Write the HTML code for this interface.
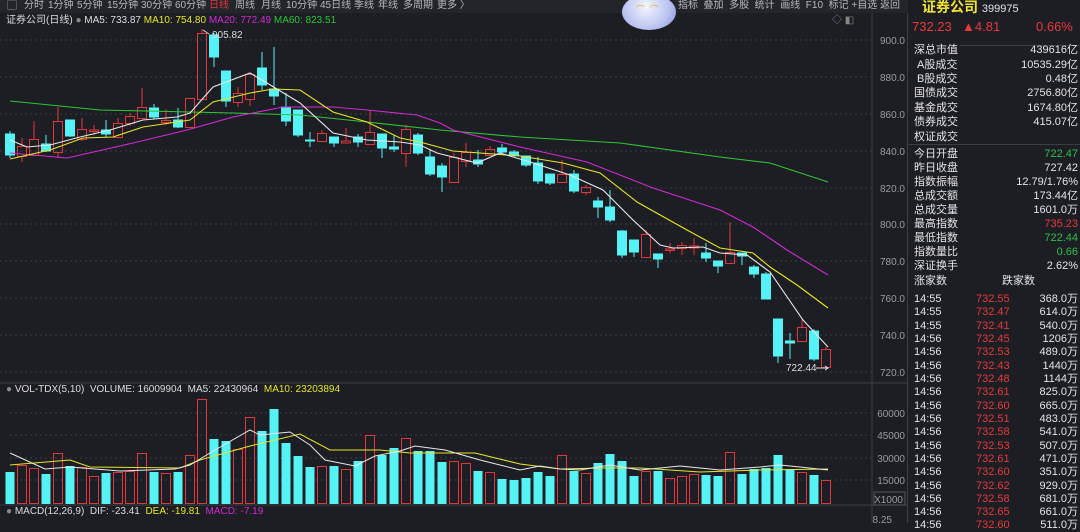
<!DOCTYPE html>
<html><head><meta charset="utf-8"><style>
*{margin:0;padding:0;box-sizing:border-box}
body{width:1080px;height:523px;background:#1c1e23;overflow:hidden;position:relative;font-family:"Liberation Sans","Noto Sans CJK SC",sans-serif;color:#c8c9cc}
.t{position:absolute;white-space:nowrap;font-size:10px;line-height:12px}
.tb{position:absolute;top:0;white-space:nowrap;font-size:10px;line-height:12px;color:#b8b9bc}
.r{color:#e8393d}.g{color:#2fc04a}.w{color:#e4e4e6}
.row{position:absolute;left:914px;width:164px;font-size:11px;line-height:13px;color:#e4e4e6}
.row span{position:absolute;right:0}
</style></head><body>
<div style="position:absolute;left:0;top:0;width:908px;height:13px;background:#22252a"></div>
<div class="t" style="left:7px;top:1px;color:#aaa">▢</div>
<div class="tb" style="left:24px">分时</div><div class="tb" style="left:48px">1分钟</div><div class="tb" style="left:77px">5分钟</div><div class="tb" style="left:107px">15分钟</div><div class="tb" style="left:141px">30分钟</div><div class="tb" style="left:175px">60分钟</div><div class="tb r" style="left:209px">日线</div><div class="tb" style="left:235px">周线</div><div class="tb" style="left:261px">月线</div><div class="tb" style="left:286px">10分钟</div><div class="tb" style="left:320px">45日线</div><div class="tb" style="left:354px">季线</div><div class="tb" style="left:378px">年线</div><div class="tb" style="left:403px">多周期</div><div class="tb" style="left:437px">更多 〉</div>
<div class="t" style="left:678px;top:0px;color:#b8b9bc">指标&nbsp;&nbsp;叠加&nbsp;&nbsp;多股&nbsp;&nbsp;统计&nbsp;&nbsp;画线&nbsp;&nbsp;F10&nbsp;&nbsp;标记&nbsp;+自选&nbsp;返回</div>
<div style="position:absolute;left:622px;top:-6px;width:54px;height:36px;border-radius:50%;background:radial-gradient(circle at 45% 35%,#f4f6ff,#b9c3f0 60%,#7f8cd8)"></div>
<div class="t" style="left:636px;top:4px;color:#e0a030;font-size:9px">⌒&nbsp;&nbsp;⌒</div>
<div class="t" style="left:6px;top:15px;color:#dcdcde">证券公司(日线) <span style="color:#888">●</span> MA5: 733.87 <span style="color:#e6e62a">MA10: 754.80</span> <span style="color:#d22ad2">MA20: 772.49</span> <span style="color:#2fc437">MA60: 823.51</span></div>
<div class="t" style="left:832px;top:15px;color:#888">◇ ◧</div>
<svg width="908" height="523" style="position:absolute;left:0;top:0">
<g stroke="#3a3d44" stroke-dasharray="2,3" stroke-width="1">
<line x1="0" x2="872" y1="40" y2="40"/><line x1="0" x2="872" y1="77" y2="77"/><line x1="0" x2="872" y1="114" y2="114"/><line x1="0" x2="872" y1="151" y2="151"/><line x1="0" x2="872" y1="188" y2="188"/><line x1="0" x2="872" y1="224" y2="224"/><line x1="0" x2="872" y1="261" y2="261"/><line x1="0" x2="872" y1="298" y2="298"/><line x1="0" x2="872" y1="335" y2="335"/><line x1="0" x2="872" y1="372" y2="372"/>
<line x1="10" x2="872" y1="413" y2="413"/><line x1="10" x2="872" y1="435" y2="435"/><line x1="10" x2="872" y1="458" y2="458"/><line x1="10" x2="872" y1="480" y2="480"/>
</g>
<line x1="872" y1="13" x2="872" y2="523" stroke="#3a3d44"/>
<line x1="0" y1="383" x2="908" y2="383" stroke="#3a3d44"/>
<line x1="0" y1="505" x2="908" y2="505" stroke="#3a3d44"/>
<line x1="907.5" y1="13" x2="907.5" y2="523" stroke="#3a3d44"/>
<g fill="#9a9ca0" font-size="10" font-family="Liberation Sans" text-anchor="end">
<text x="905" y="44">900.0</text><text x="905" y="81">880.0</text><text x="905" y="118">860.0</text><text x="905" y="155">840.0</text><text x="905" y="192">820.0</text><text x="905" y="228">800.0</text><text x="905" y="265">780.0</text><text x="905" y="302">760.0</text><text x="905" y="339">740.0</text><text x="905" y="376">720.0</text>
<text x="905" y="417">60000</text><text x="905" y="439">45000</text><text x="905" y="462">30000</text><text x="905" y="484">15000</text><text x="903" y="503">X1000</text><text x="892" y="523">8.25</text>
</g>
<rect x="874" y="492" width="31" height="13" fill="none" stroke="#555"/>
<g id="c">
<g stroke="#e0363c" fill="none" stroke-width="1">
<path d="M22 138V146M22 156V162M34 121V139M58 107V121M58 152V158M82 118V129M82 139V141M94 125V130M94 131V135M118 118V123M130 113V116M130 123V126M142 88V107M166 109V120M166 122V125M190 127V128M202 29V33M238 87V93M238 102V107M250 73V74M250 99V106M322 130V133M346 128V141M370 110V132M406 125V129M406 153V167M454 153V157M454 182V183M466 143V152M466 161V167M490 146V149M490 155V156M562 160V174M586 185V187M586 192V195M646 230V234M670 243V249M670 250V253M682 242V245M682 248V255M694 238V246M694 248V255M730 222V252M802 320V327M826 347V349"/>
<rect x="17.5" y="146.5" width="9" height="10"/><rect x="29.5" y="139.5" width="9" height="16"/><rect x="53.5" y="121.5" width="9" height="31"/><rect x="77.5" y="129.5" width="9" height="10"/><rect x="89.5" y="130" width="9" height="1.5"/><rect x="113.5" y="123.5" width="9" height="14"/><rect x="125.5" y="116.5" width="9" height="7"/><rect x="137.5" y="107.5" width="9" height="11"/><rect x="161.5" y="120.5" width="9" height="2"/><rect x="185.5" y="98.5" width="9" height="29"/><rect x="197.5" y="33.5" width="9" height="66"/><rect x="233.5" y="93.5" width="9" height="9"/><rect x="245.5" y="74.5" width="9" height="25"/><rect x="317.5" y="133.5" width="9" height="8"/><rect x="341.5" y="141" width="9" height="2"/><rect x="365.5" y="132.5" width="9" height="12"/><rect x="401.5" y="129.5" width="9" height="24"/><rect x="449.5" y="157.5" width="9" height="25"/><rect x="461.5" y="152.5" width="9" height="9"/><rect x="485.5" y="149.5" width="9" height="6"/><rect x="557.5" y="174.5" width="9" height="8"/><rect x="581.5" y="187.5" width="9" height="5"/><rect x="641.5" y="234.5" width="9" height="23"/><rect x="665.5" y="249" width="9" height="1.5"/><rect x="677.5" y="245.5" width="9" height="3"/><rect x="689.5" y="246" width="9" height="2"/><rect x="725.5" y="252.5" width="9" height="11"/><rect x="797.5" y="327.5" width="9" height="14"/><rect x="821.5" y="349.5" width="9" height="18"/>
</g>
<g stroke="#55f3f6" fill="#55f3f6" stroke-width="1">
<path d="M10 131V158M46 135V152M70 120V137M106 120V137M154 104V119M178 108V128M214 33V67M226 71V107M262 52V90M274 47V105M286 93V126M298 110V137M310 132V147M334 137V147M358 134V147M382 134V158M394 135V152M418 133V155M430 150V176M442 163V192M478 150V167M502 144V154M514 150V157M526 156V167M538 157V184M550 174V185M574 170V193M598 197V218M610 190V222M622 230V258M634 240V257M658 254V268M706 243V262M718 261V273M742 253V265M754 265V278M766 272V299M778 319V363M790 333V359M814 329V361"/>
<rect x="5.5" y="134" width="9" height="21"/><rect x="41.5" y="144" width="9" height="7"/><rect x="65.5" y="120" width="9" height="16"/><rect x="101.5" y="130" width="9" height="4"/><rect x="149.5" y="108" width="9" height="9"/><rect x="173.5" y="120" width="9" height="7"/><rect x="209.5" y="35" width="9" height="22"/><rect x="221.5" y="71" width="9" height="30"/><rect x="257.5" y="68" width="9" height="17"/><rect x="269.5" y="89" width="9" height="7"/><rect x="281.5" y="107" width="9" height="14"/><rect x="293.5" y="110" width="9" height="25"/><rect x="305.5" y="140" width="9" height="1"/><rect x="329.5" y="137" width="9" height="6"/><rect x="353.5" y="137" width="9" height="5"/><rect x="377.5" y="134" width="9" height="14"/><rect x="389.5" y="147" width="9" height="2"/><rect x="413.5" y="135" width="9" height="18"/><rect x="425.5" y="157" width="9" height="17"/><rect x="437.5" y="166" width="9" height="11"/><rect x="473.5" y="160" width="9" height="4"/><rect x="497.5" y="148" width="9" height="4"/><rect x="509.5" y="152" width="9" height="3"/><rect x="521.5" y="156" width="9" height="9"/><rect x="533.5" y="163" width="9" height="18"/><rect x="545.5" y="174" width="9" height="9"/><rect x="569.5" y="174" width="9" height="17"/><rect x="593.5" y="201" width="9" height="6"/><rect x="605.5" y="207" width="9" height="13"/><rect x="617.5" y="231" width="9" height="24"/><rect x="629.5" y="240" width="9" height="12"/><rect x="653.5" y="254" width="9" height="5"/><rect x="701.5" y="253" width="9" height="5"/><rect x="713.5" y="261" width="9" height="5"/><rect x="737.5" y="253" width="9" height="3"/><rect x="749.5" y="267" width="9" height="7"/><rect x="761.5" y="274" width="9" height="25"/><rect x="773.5" y="319" width="9" height="37"/><rect x="785.5" y="341" width="9" height="2"/><rect x="809.5" y="331" width="9" height="28"/>
</g>
</g>
<g fill="none" stroke-width="1.1">
<polyline stroke="#2fc437" points="10,101 100,110 233,113 300,115 367,122 440,130 520,137 620,143 720,157 770,163 828,182"/>
<polyline stroke="#d22ad2" points="10,153 67,158 133,143 187,130 233,117 283,107 333,107 367,110 417,115 440,123 453,130 520,147 587,162 653,188 720,210 753,227 787,250 828,275"/>
<polyline stroke="#e6e62a" points="10,159 50,150 83,138 113,137 143,127 177,122 190,120 213,102 250,93 273,89 300,90 333,112 367,122 400,138 420,142 453,151 520,156 563,163 600,173 637,202 687,230 720,248 753,253 770,267 797,285 828,308"/>
<polyline stroke="#e8e8e8" points="10,140 27,147 50,145 80,137 110,130 143,120 177,117 190,113 213,87 250,73 267,83 300,103 333,133 367,140 400,142 420,145 437,153 477,163 500,153 530,162 570,175 603,190 633,220 660,245 673,248 703,247 720,253 747,255 770,272 803,320 828,347"/>
</g>
<text x="212" y="38" fill="#ddd" font-size="10" font-family="Liberation Sans">905.82</text>
<path d="M203 30l6 4" stroke="#ddd"/>
<text x="786" y="371" fill="#ddd" font-size="10" font-family="Liberation Sans">722.44</text>
<path d="M816 368h12m-3-2l3 2-3 2" stroke="#ddd" fill="none"/>
<g fill="#55f3f6">
<rect x="5.5" y="472" width="9" height="32"/><rect x="41.5" y="474" width="9" height="30"/><rect x="65.5" y="466" width="9" height="38"/><rect x="101.5" y="473" width="9" height="31"/><rect x="149.5" y="472" width="9" height="32"/><rect x="173.5" y="472" width="9" height="32"/><rect x="209.5" y="439" width="9" height="65"/><rect x="221.5" y="441" width="9" height="63"/><rect x="257.5" y="431" width="9" height="73"/><rect x="269.5" y="409" width="9" height="95"/><rect x="281.5" y="443" width="9" height="61"/><rect x="293.5" y="456" width="9" height="48"/><rect x="305.5" y="467" width="9" height="37"/><rect x="329.5" y="466" width="9" height="38"/><rect x="353.5" y="461" width="9" height="43"/><rect x="377.5" y="455" width="9" height="49"/><rect x="389.5" y="448" width="9" height="56"/><rect x="413.5" y="451" width="9" height="53"/><rect x="425.5" y="451" width="9" height="53"/><rect x="437.5" y="462" width="9" height="42"/><rect x="473.5" y="471" width="9" height="33"/><rect x="497.5" y="479" width="9" height="25"/><rect x="509.5" y="480" width="9" height="24"/><rect x="521.5" y="478" width="9" height="26"/><rect x="533.5" y="472" width="9" height="32"/><rect x="545.5" y="476" width="9" height="28"/><rect x="569.5" y="471" width="9" height="33"/><rect x="593.5" y="463" width="9" height="41"/><rect x="605.5" y="454" width="9" height="50"/><rect x="617.5" y="461" width="9" height="43"/><rect x="629.5" y="476" width="9" height="28"/><rect x="653.5" y="471" width="9" height="33"/><rect x="701.5" y="475" width="9" height="29"/><rect x="713.5" y="476" width="9" height="28"/><rect x="737.5" y="474" width="9" height="30"/><rect x="749.5" y="469" width="9" height="35"/><rect x="761.5" y="468" width="9" height="36"/><rect x="773.5" y="455" width="9" height="49"/><rect x="785.5" y="469" width="9" height="35"/><rect x="809.5" y="475" width="9" height="29"/>
</g>
<g fill="none" stroke="#e0363c">
<rect x="17.5" y="465.5" width="9" height="38"/><rect x="29.5" y="468.5" width="9" height="35"/><rect x="53.5" y="453.5" width="9" height="50"/><rect x="77.5" y="467.5" width="9" height="36"/><rect x="89.5" y="476.5" width="9" height="27"/><rect x="113.5" y="472.5" width="9" height="31"/><rect x="125.5" y="471.5" width="9" height="32"/><rect x="137.5" y="453.5" width="9" height="50"/><rect x="161.5" y="473.5" width="9" height="30"/><rect x="185.5" y="455.5" width="9" height="48"/><rect x="197.5" y="399.5" width="9" height="104"/><rect x="233.5" y="449.5" width="9" height="54"/><rect x="245.5" y="417.5" width="9" height="86"/><rect x="317.5" y="466.5" width="9" height="37"/><rect x="341.5" y="469.5" width="9" height="34"/><rect x="365.5" y="435.5" width="9" height="68"/><rect x="401.5" y="438.5" width="9" height="65"/><rect x="449.5" y="461.5" width="9" height="42"/><rect x="461.5" y="463.5" width="9" height="40"/><rect x="485.5" y="472.5" width="9" height="31"/><rect x="557.5" y="455.5" width="9" height="48"/><rect x="581.5" y="473.5" width="9" height="30"/><rect x="641.5" y="471.5" width="9" height="32"/><rect x="665.5" y="478.5" width="9" height="25"/><rect x="677.5" y="476.5" width="9" height="27"/><rect x="689.5" y="474.5" width="9" height="29"/><rect x="725.5" y="452.5" width="9" height="51"/><rect x="797.5" y="472.5" width="9" height="31"/><rect x="821.5" y="480.5" width="9" height="23"/>
</g>
<g fill="none" stroke-width="1">
<polyline stroke="#e6e62a" points="10,465 70,460 90,467 180,468 200,460 250,446 300,434 330,450 380,450 410,453 475,453 520,464 560,469 600,468 640,468 700,472 760,470 828,469"/>
<polyline stroke="#e8e8e8" points="10,453 45,469 70,467 120,471 175,469 190,465 215,450 250,430 260,435 290,432 310,445 325,460 355,466 375,456 400,451 415,446 445,450 480,460 520,470 540,466 560,469 580,470 610,465 640,470 680,466 720,470 760,467 780,465 800,467 828,470"/>
</g>
</svg>
<div class="t" style="left:6px;top:384px;color:#dcdcde"><span style="color:#888">●</span> VOL-TDX(5,10)&nbsp; VOLUME: 16009904&nbsp; MA5: 22430964&nbsp; <span style="color:#e6e62a">MA10: 23203894</span></div>
<div class="t" style="left:6px;top:506px;color:#dcdcde"><span style="color:#888">●</span> MACD(12,26,9)&nbsp; DIF: -23.41&nbsp; <span style="color:#e6e62a">DEA: -19.81</span>&nbsp; <span style="color:#d22ad2">MACD: -7.19</span></div>

<div class="t" style="left:922px;top:-1px;font-size:14px;line-height:16px;color:#f0e33a;font-weight:bold">证券公司 <span style="font-size:11px;color:#e4e4e6;font-weight:normal">399975</span></div>
<div class="t r" style="left:912px;top:19px;font-size:13px;line-height:16px">732.23</div>
<div class="t r" style="left:962px;top:19px;font-size:13px;line-height:16px">▲4.81</div>
<div class="t r" style="left:1036px;top:19px;font-size:13px;line-height:16px">0.66%</div>
<div style="position:absolute;left:960px;top:45px;width:120px;height:1px;background:#3a3d44"></div>
<div style="position:absolute;left:908px;top:144px;width:172px;height:1px;background:#3a3d44"></div>
<div class="row" style="top:44px">深总市值<span>439616亿</span></div>
<div class="row" style="top:59px">&nbsp;A股成交<span>10535.29亿</span></div>
<div class="row" style="top:73px">&nbsp;B股成交<span>0.48亿</span></div>
<div class="row" style="top:87px">国债成交<span>2756.80亿</span></div>
<div class="row" style="top:102px">基金成交<span>1674.80亿</span></div>
<div class="row" style="top:116px">债券成交<span>415.07亿</span></div>
<div class="row" style="top:131px">权证成交</div>
<div class="row" style="top:148px">今日开盘<span class="g">722.47</span></div>
<div class="row" style="top:162px">昨日收盘<span>727.42</span></div>
<div class="row" style="top:176px">指数振幅<span>12.79/1.76%</span></div>
<div class="row" style="top:190px">总成交额<span>173.44亿</span></div>
<div class="row" style="top:204px">总成交量<span>1601.0万</span></div>
<div class="row" style="top:218px">最高指数<span class="r">735.23</span></div>
<div class="row" style="top:232px">最低指数<span class="g">722.44</span></div>
<div class="row" style="top:246px">指数量比<span class="g">0.66</span></div>
<div class="row" style="top:260px">深证换手<span>2.62%</span></div>
<div class="row" style="top:275px">涨家数<b style="position:absolute;left:88px;font-weight:normal">跌家数</b></div>
<div class="row" style="top:293px">14:55<b class="r" style="position:absolute;left:62px;font-weight:normal">732.55</b><span>368.0万</span></div>
<div class="row" style="top:306px">14:55<b class="r" style="position:absolute;left:62px;font-weight:normal">732.47</b><span>614.0万</span></div>
<div class="row" style="top:320px">14:55<b class="r" style="position:absolute;left:62px;font-weight:normal">732.41</b><span>540.0万</span></div>
<div class="row" style="top:333px">14:56<b class="r" style="position:absolute;left:62px;font-weight:normal">732.45</b><span>1206万</span></div>
<div class="row" style="top:346px">14:56<b class="r" style="position:absolute;left:62px;font-weight:normal">732.53</b><span>489.0万</span></div>
<div class="row" style="top:360px">14:56<b class="r" style="position:absolute;left:62px;font-weight:normal">732.43</b><span>1440万</span></div>
<div class="row" style="top:373px">14:56<b class="r" style="position:absolute;left:62px;font-weight:normal">732.48</b><span>1144万</span></div>
<div class="row" style="top:386px">14:56<b class="r" style="position:absolute;left:62px;font-weight:normal">732.61</b><span>825.0万</span></div>
<div class="row" style="top:400px">14:56<b class="r" style="position:absolute;left:62px;font-weight:normal">732.60</b><span>665.0万</span></div>
<div class="row" style="top:413px">14:56<b class="r" style="position:absolute;left:62px;font-weight:normal">732.51</b><span>483.0万</span></div>
<div class="row" style="top:426px">14:56<b class="r" style="position:absolute;left:62px;font-weight:normal">732.58</b><span>541.0万</span></div>
<div class="row" style="top:440px">14:56<b class="r" style="position:absolute;left:62px;font-weight:normal">732.53</b><span>507.0万</span></div>
<div class="row" style="top:453px">14:56<b class="r" style="position:absolute;left:62px;font-weight:normal">732.61</b><span>471.0万</span></div>
<div class="row" style="top:466px">14:56<b class="r" style="position:absolute;left:62px;font-weight:normal">732.60</b><span>351.0万</span></div>
<div class="row" style="top:480px">14:56<b class="r" style="position:absolute;left:62px;font-weight:normal">732.62</b><span>929.0万</span></div>
<div class="row" style="top:493px">14:56<b class="r" style="position:absolute;left:62px;font-weight:normal">732.58</b><span>681.0万</span></div>
<div class="row" style="top:506px">14:56<b class="r" style="position:absolute;left:62px;font-weight:normal">732.65</b><span>661.0万</span></div>
<div class="row" style="top:519px">14:56<b class="r" style="position:absolute;left:62px;font-weight:normal">732.60</b><span>511.0万</span></div>
</body></html>
